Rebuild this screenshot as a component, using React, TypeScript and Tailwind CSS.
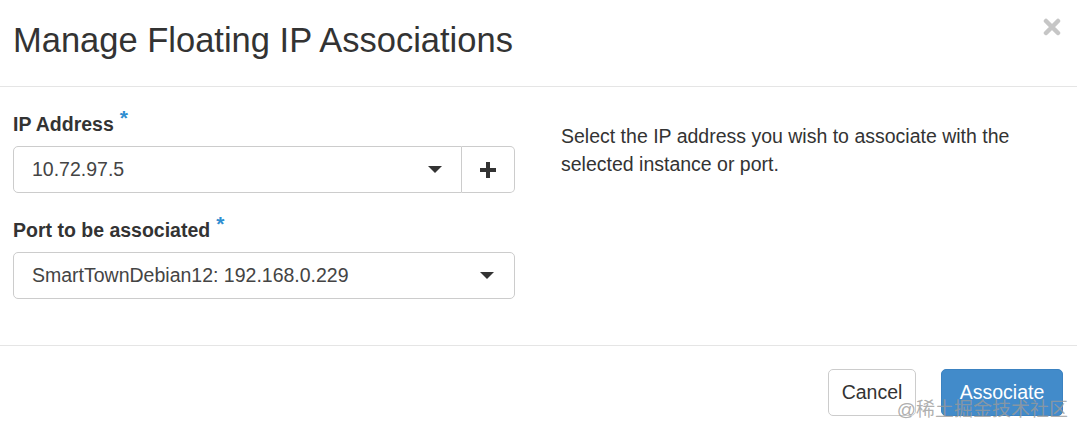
import React from "react"

const font = { fontFamily: '"Liberation Sans", Arial, "Noto Sans CJK SC", sans-serif' }

function Caret() {
  return (
    <svg width="14" height="7" viewBox="0 0 14 7" className="shrink-0">
      <path d="M0 0 L14 0 L7 7 Z" fill="#333" />
    </svg>
  )
}

function Required({ children }: { children: React.ReactNode }) {
  return (
    <label className="flex items-start text-[19.5px] leading-[28px] font-bold text-[#333]">
      {children}
      <span className="ml-[6px] text-[21px] leading-[16px] text-[#2f8ed1] font-bold">*</span>
    </label>
  )
}

export default function App() {
  return (
    <div className="relative w-[1077px] h-[430px] bg-white overflow-hidden" style={font}>
      {/* Header */}
      <div className="h-[87px] border-b border-[#e5e5e5] flex items-start justify-between px-[13px] pt-[22px]">
        <h3 className="text-[34.5px] leading-[37px] text-[#333] font-normal">Manage Floating IP Associations</h3>
        <button className="mt-[-4px] mr-[3px] w-[18px] h-[18px] flex items-center justify-center">
          <svg width="18" height="18" viewBox="0 0 18 18">
            <path d="M3 3 L15 15 M15 3 L3 15" stroke="#c6c6c6" strokeWidth="4.5" strokeLinecap="round" />
          </svg>
        </button>
      </div>

      {/* Body */}
      <div className="h-[259px] border-b border-[#e5e5e5] flex gap-[46px] px-[13px] pt-[23px]">
        <div className="w-[502px] flex flex-col">
          <Required>IP Address</Required>
          <div className="mt-[8px] flex h-[47px]">
            <div className="flex-1 flex items-center justify-between border border-[#ccc] rounded-l-[5px] pl-[18px] pr-[19px] text-[19.5px] text-[#444]">
              <span>10.72.97.5</span>
              <Caret />
            </div>
            <button className="w-[53px] border border-l-0 border-[#ccc] rounded-r-[5px] flex items-center justify-center">
              <svg width="16" height="16" viewBox="0 0 16 16">
                <path d="M8 0 V16 M0 8 H16" stroke="#333" strokeWidth="4" />
              </svg>
            </button>
          </div>

          <div className="mt-[23px]">
            <Required>Port to be associated</Required>
          </div>
          <div className="mt-[8px] h-[47px] flex items-center justify-between border border-[#ccc] rounded-[5px] pl-[18px] pr-[20px] text-[19.5px] text-[#444]">
            <span>SmartTownDebian12: 192.168.0.229</span>
            <Caret />
          </div>
        </div>

        <div className="w-[502px] pt-[12px]">
          <p className="text-[19.5px] leading-[28px] text-[#333]">
            Select the IP address you wish to associate with the selected instance or port.
          </p>
        </div>
      </div>

      {/* Footer */}
      <div className="flex justify-end gap-[25px] pr-[14px] pt-[23px]">
        <button className="w-[88px] h-[47px] border border-[#ccc] rounded-[5px] bg-white text-[19.5px] text-[#333]">
          Cancel
        </button>
        <button className="w-[122px] h-[47px] rounded-[5px] bg-[#428bca] border border-[#3b82c1] text-[19.5px] text-white">
          Associate
        </button>
      </div>

      <span className="absolute right-[9px] bottom-[9px] text-[19px] leading-[22px] text-[#9a9a9a]/80">
        @稀土掘金技术社区
      </span>
    </div>
  )
}
